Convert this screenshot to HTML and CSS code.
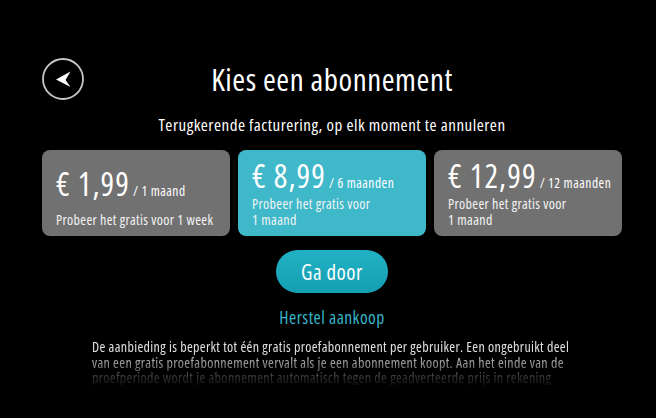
FILE: index.html
```html
<!DOCTYPE html>
<html lang="nl">
<head>
<meta charset="utf-8">
<title>Kies een abonnement</title>
<link rel="stylesheet" href="styles.css">
</head>
<body>
<main class="screen">
  <header class="header">
    <button class="back" aria-label="Terug">
      <svg viewBox="0 0 42 42" width="42" height="42">
        <circle cx="21" cy="21" r="20" fill="none" stroke="#c8c8c8" stroke-width="1.8"/>
        <path d="M14 21.5 L28.5 13.5 L23.5 22 L28.5 29 Z" fill="#fff"/>
      </svg>
    </button>
    <h1 class="title">Kies een abonnement</h1>
    <span class="spacer"></span>
  </header>
  <p class="subtitle">Terugkerende facturering, op elk moment te annuleren</p>
  <section class="plans">
    <div class="plan">
      <div class="price"><div class="price-line"><span class="amount">€ 1,99</span> <span class="period">/ 1 maand</span></div></div>
      <div class="trial">Probeer het gratis voor 1 week</div>
    </div>
    <div class="plan selected">
      <div class="price"><div class="price-line"><span class="amount">€ 8,99</span> <span class="period">/ 6 maanden</span></div></div>
      <div class="trial">Probeer het gratis voor<br>1 maand</div>
    </div>
    <div class="plan">
      <div class="price"><div class="price-line"><span class="amount">€ 12,99</span> <span class="period">/ 12 maanden</span></div></div>
      <div class="trial">Probeer het gratis voor<br>1 maand</div>
    </div>
  </section>
  <div class="actions">
    <button class="continue">Ga door</button>
    <a class="restore" href="#">Herstel aankoop</a>
  </div>
  <p class="disclaimer">De aanbieding is beperkt tot één gratis proefabonnement per gebruiker. Een ongebruikt deel van een gratis proefabonnement vervalt als je een abonnement koopt. Aan het einde van de proefperiode wordt je abonnement automatisch tegen de geadverteerde prijs in rekening gebracht, tenzij je het ten minste 24 uur voor het einde van de proefperiode opzegt.</p>
</main>
</body>
</html>
```

FILE: styles.css
```css
html, body {
  margin: 0;
  padding: 0;
  background: #000;
}
body {
  font-family: "Open Sans", sans-serif;
  font-stretch: 75%;
  font-weight: 400;
  color: #fff;
  width: 656px;
  height: 418px;
  overflow: hidden;
}
.screen {
  padding: 58px 34px 0 42px;
  display: flex;
  flex-direction: column;
}
.header {
  display: grid;
  grid-template-columns: 42px 1fr 42px;
  align-items: center;
  height: 42px;
}
.back {
  width: 42px;
  height: 42px;
  padding: 0;
  border: 0;
  background: transparent;
  display: block;
}
.back svg { display: block; }
.title {
  margin: 0;
  text-align: center;
  font-weight: 400;
  font-size: 31px;
  letter-spacing: 0.55px;
  line-height: 42px;
  color: #fff;
}
.subtitle {
  margin: 15px 0 0;
  text-align: center;
  font-size: 17px;
  letter-spacing: 0.5px;
  line-height: 20px;
  color: #fff;
}
.plans {
  margin-top: 15px;
  display: grid;
  grid-template-columns: repeat(3, 188px);
  justify-content: space-between;
}
.plan {
  height: 86px;
  box-sizing: border-box;
  border-radius: 8px;
  background: #717171;
  padding: 6px 14px 8px;
  display: flex;
  flex-direction: column;
  white-space: nowrap;
}
.plan.selected {
  background: #3fb8ca;
}
.price {
  flex: 1;
  display: flex;
  align-items: center;
}
.price-line {
  line-height: 1;
}
.amount {
  font-size: 32px;
  letter-spacing: 1.1px;
}
.period {
  font-size: 13.5px;
  letter-spacing: 0.5px;
}
.trial {
  font-size: 14px;
  letter-spacing: 0.35px;
  line-height: 16px;
  color: #f4f4f4;
}
.actions {
  display: flex;
  flex-direction: column;
  align-items: center;
  margin-top: 14px;
}
.continue {
  width: 112px;
  height: 43px;
  border: 0;
  border-radius: 22px;
  background: linear-gradient(#22b1c4, #149fb3);
  color: #fff;
  font-family: inherit;
  font-stretch: inherit;
  font-weight: inherit;
  font-size: 21px;
  letter-spacing: 0.5px;
  padding: 0;
}
.restore {
  margin-top: 14px;
  font-size: 17.5px;
  letter-spacing: 0.45px;
  line-height: 20px;
  color: #36b4c8;
  text-decoration: none;
}
.disclaimer {
  margin: 12px 0 0 50px;
  width: 484px;
  height: 46px;
  overflow: hidden;
  font-size: 14px;
  letter-spacing: 0.35px;
  line-height: 15.5px;
  color: #e0e0e0;
  -webkit-mask-image: linear-gradient(to bottom, #000 0, #000 30%, rgba(0,0,0,0.2) 85%, rgba(0,0,0,0.1) 100%);
  mask-image: linear-gradient(to bottom, #000 0, #000 30%, rgba(0,0,0,0.2) 85%, rgba(0,0,0,0.1) 100%);
}
```
